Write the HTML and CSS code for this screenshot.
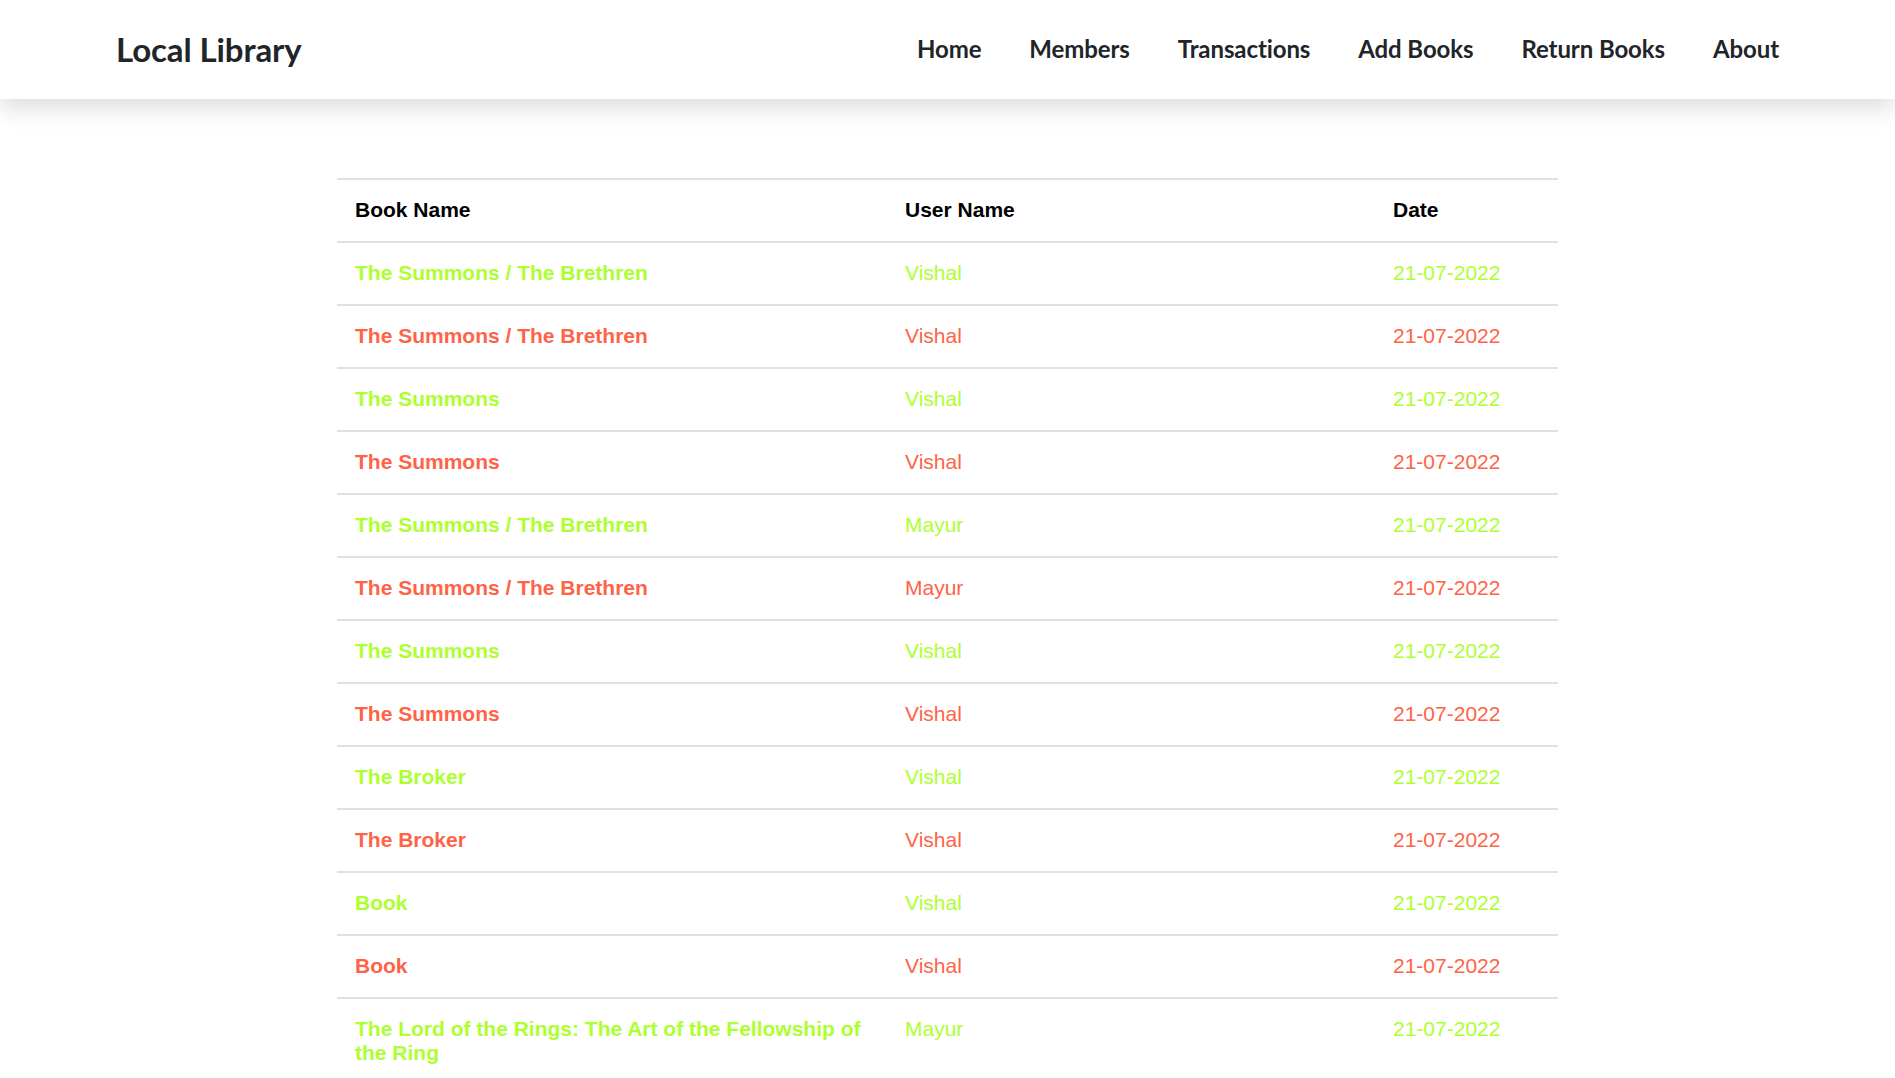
FILE: index.html
```html
<!DOCTYPE html>
<html lang="en">
<head>
<meta charset="utf-8">
<title>Local Library</title>
<link rel="stylesheet" href="styles.css">
</head>
<body>
<header class="navbar">
  <div class="brand">Local Library</div>
  <nav class="nav">
    <a href="#">Home</a>
    <a href="#">Members</a>
    <a href="#">Transactions</a>
    <a href="#">Add Books</a>
    <a href="#">Return Books</a>
    <a href="#">About</a>
  </nav>
</header>
<main class="content">
  <table class="tx">
    <colgroup><col class="c1"><col class="c2"><col class="c3"></colgroup>
    <thead>
      <tr><th>Book Name</th><th>User Name</th><th>Date</th></tr>
    </thead>
    <tbody>
      <tr class="issue"><td class="book">The Summons / The Brethren</td><td>Vishal</td><td>21-07-2022</td></tr>
      <tr class="ret"><td class="book">The Summons / The Brethren</td><td>Vishal</td><td>21-07-2022</td></tr>
      <tr class="issue"><td class="book">The Summons</td><td>Vishal</td><td>21-07-2022</td></tr>
      <tr class="ret"><td class="book">The Summons</td><td>Vishal</td><td>21-07-2022</td></tr>
      <tr class="issue"><td class="book">The Summons / The Brethren</td><td>Mayur</td><td>21-07-2022</td></tr>
      <tr class="ret"><td class="book">The Summons / The Brethren</td><td>Mayur</td><td>21-07-2022</td></tr>
      <tr class="issue"><td class="book">The Summons</td><td>Vishal</td><td>21-07-2022</td></tr>
      <tr class="ret"><td class="book">The Summons</td><td>Vishal</td><td>21-07-2022</td></tr>
      <tr class="issue"><td class="book">The Broker</td><td>Vishal</td><td>21-07-2022</td></tr>
      <tr class="ret"><td class="book">The Broker</td><td>Vishal</td><td>21-07-2022</td></tr>
      <tr class="issue"><td class="book">Book</td><td>Vishal</td><td>21-07-2022</td></tr>
      <tr class="ret"><td class="book">Book</td><td>Vishal</td><td>21-07-2022</td></tr>
      <tr class="issue"><td class="book">The Lord of the Rings: The Art of the Fellowship of the Ring</td><td>Mayur</td><td>21-07-2022</td></tr>
    </tbody>
  </table>
</main>
</body>
</html>
```
FILE: styles.css
```css
html, body {
  margin: 0;
  padding: 0;
  background: #ffffff;
}
body {
  font-family: "Liberation Sans", Arial, sans-serif;
}
.navbar {
  height: 99px;
  display: flex;
  align-items: center;
  justify-content: space-between;
  padding: 0 116px;
  background: #ffffff;
  box-shadow: 0 10px 22px rgba(0, 0, 0, 0.13);
  position: relative;
  z-index: 1;
}
.brand {
  font-family: Lato, "Open Sans", sans-serif;
  font-weight: 700;
  font-size: 33px;
  letter-spacing: -0.1px;
  color: #212529;
  margin-top: -2px;
}
.nav {
  display: flex;
  gap: 48px;
}
.nav a {
  font-family: Lato, "Open Sans", sans-serif;
  font-weight: 700;
  font-size: 24px;
  letter-spacing: -0.1px;
  color: #212529;
  text-decoration: none;
  margin-top: -3px;
}
.content {
  padding-top: 79px;
}
.tx {
  width: 1221px;
  margin: 0 auto;
  border-collapse: collapse;
  font-size: 21px;
  line-height: 24px;
  table-layout: fixed;
}
.c1 { width: 550px; }
.c2 { width: 488px; }
.c3 { width: 183px; }
.tx th, .tx td {
  text-align: left;
  vertical-align: top;
  padding: 18px 18px 19px 18px;
  border-top: 2px solid #dee2e6;
}
.tx th {
  font-weight: 700;
  color: #000000;
  border-bottom: 2px solid #dee2e6;
}
.tx td.book {
  font-weight: 700;
}
.tx tr.issue td {
  color: #adff2f;
}
.tx tr.ret td {
  color: #ff6347;
}
```
